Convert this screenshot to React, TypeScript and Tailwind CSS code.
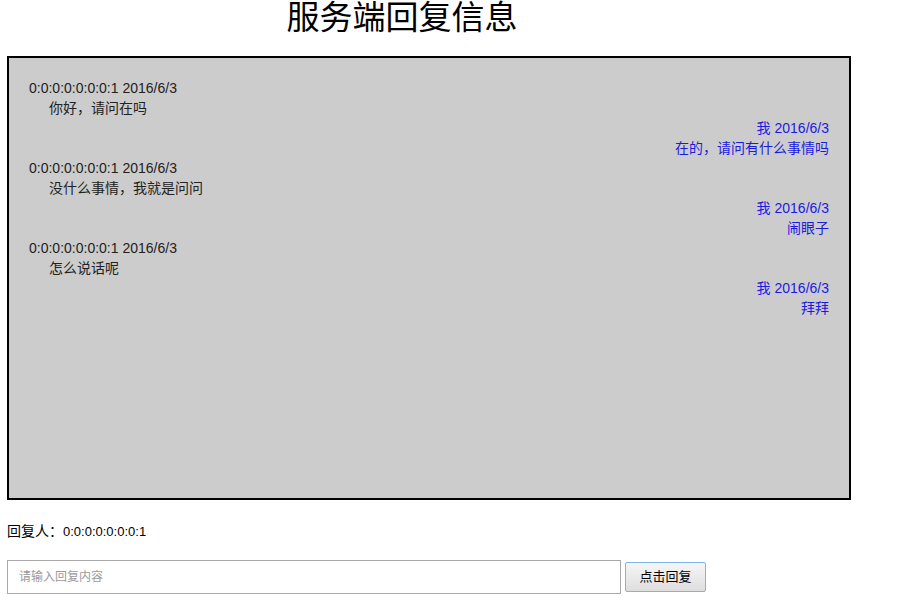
const messages = [
  { mine: false, who: '0:0:0:0:0:0:0:1', date: '2016/6/3', text: '你好，请问在吗' },
  { mine: true, who: '我', date: '2016/6/3', text: '在的，请问有什么事情吗' },
  { mine: false, who: '0:0:0:0:0:0:0:1', date: '2016/6/3', text: '没什么事情，我就是问问' },
  { mine: true, who: '我', date: '2016/6/3', text: '闹眼子' },
  { mine: false, who: '0:0:0:0:0:0:0:1', date: '2016/6/3', text: '怎么说话呢' },
  { mine: true, who: '我', date: '2016/6/3', text: '拜拜' },
];

export default function App() {
  return (
    <div
      className="min-h-screen bg-white text-[14px] text-[#222]"
      style={{ fontFamily: '"Liberation Sans", "Noto Sans CJK SC", sans-serif' }}
    >
      <div className="w-[804px] text-center text-[33px] leading-[36px] text-black">
        服务端回复信息
      </div>

      {/* Chat log */}
      <div className="ml-[7px] mt-[20px] w-[844px] h-[444px] border-2 border-black bg-[#cccccc] px-[20px] pt-[20px] leading-[20px]">
        {messages.map((m, i) =>
          m.mine ? (
            <div key={i} className="text-right text-[#1a1ae0]">
              <div>{m.who} {m.date}</div>
              <div>{m.text}</div>
            </div>
          ) : (
            <div key={i} className="text-[#222]">
              <div>{m.who} {m.date}</div>
              <div className="pl-[20px]">{m.text}</div>
            </div>
          )
        )}
      </div>

      <div className="ml-[7px] mt-[21px] h-[20px] leading-[20px] text-black">
        <span className="text-[14px]">回复人：</span>
        <span className="text-[13px]">0:0:0:0:0:0:0:1</span>
      </div>

      <div className="ml-[7px] mt-[19px] flex items-center">
        <input
          type="text"
          placeholder="请输入回复内容"
          className="w-[614px] h-[34px] border border-[#a9a9a9] px-[11px] text-[12px] placeholder:text-[#9a9a9a] outline-none"
        />
        <button className="ml-[4px] w-[81px] h-[30px] rounded-[2px] border border-[#7eb4ea] bg-gradient-to-b from-[#f6f6f6] to-[#dedede] text-[13px] text-black">
          点击回复
        </button>
      </div>
    </div>
  );
}
